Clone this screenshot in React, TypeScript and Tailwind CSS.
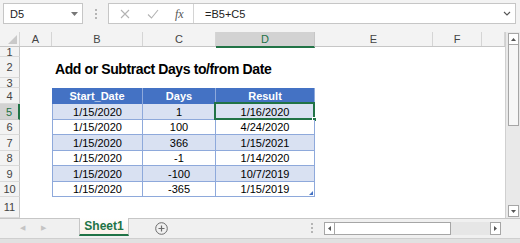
import React from 'react';

const cols = [
  { k: 'A', cls: 'w-[32px]' },
  { k: 'B', cls: 'w-[91px]' },
  { k: 'C', cls: 'w-[73px]' },
  { k: 'D', cls: 'w-[99px]' },
  { k: 'E', cls: 'w-[118px]' },
  { k: 'F', cls: 'w-[49px]' },
  { k: '', cls: 'w-[23px]' },
];

const data = [
  ['1/15/2020', '1', '1/16/2020'],
  ['1/15/2020', '100', '4/24/2020'],
  ['1/15/2020', '366', '1/15/2021'],
  ['1/15/2020', '-1', '1/14/2020'],
  ['1/15/2020', '-100', '10/7/2019'],
  ['1/15/2020', '-365', '1/15/2019'],
];

const rowH = ['h-[16px]', 'h-[15px]', 'h-[16px]', 'h-[15px]', 'h-[16px]', 'h-[15px]'];

function RowHead({ n, cls, active }: { n: number; cls: string; active?: boolean }) {
  return (
    <div
      className={
        active
          ? `${cls} w-[20px] shrink-0 bg-[#d2d2d2] border-r-2 border-r-[#217346] border-b border-b-[#c8c8c8] flex items-center justify-center text-[11px] text-[#217346]`
          : `${cls} w-[20px] shrink-0 bg-[#f3f3f3] border-r border-r-[#c6c6c6] border-b border-b-[#dadada] flex items-center justify-center text-[11px] text-[#444]`
      }
    >
      {n}
    </div>
  );
}

function Dots() {
  return (
    <div className="flex flex-col gap-[2px]">
      <span className="w-[2px] h-[2px] bg-[#b5b5b5]" />
      <span className="w-[2px] h-[2px] bg-[#b5b5b5]" />
      <span className="w-[2px] h-[2px] bg-[#b5b5b5]" />
    </div>
  );
}

export default function App() {
  return (
    <div className="w-[520px] h-[243px] overflow-hidden bg-white flex flex-col text-[#222] leading-[12px]" style={{ fontFamily: '"Liberation Sans", Arial, sans-serif' }}>
      {/* formula bar */}
      <div className="h-[32px] shrink-0 bg-[#f3f3f3] flex items-start pt-[3px] pl-[3px] pr-[4px]">
        <div className="w-[80px] h-[21px] bg-white border border-[#c6c6c6] flex items-center justify-between pl-[6px] pr-[4px] text-[11px]">
          <span>D5</span>
          <svg width="7" height="4" viewBox="0 0 7 4"><path d="M0 0h7L3.5 4z" fill="#777" /></svg>
        </div>
        <div className="w-[25px] h-[21px] flex items-center justify-center">
          <Dots />
        </div>
        <div className="flex-1 h-[21px] bg-white border border-[#c6c6c6] flex items-center">
          <div className="w-[85px] h-full flex items-center border-r border-[#d4d4d4]">
            <svg className="ml-[11px]" width="10" height="10" viewBox="0 0 10 10"><path d="M1 1l8 8M9 1l-8 8" stroke="#b3b3b3" strokeWidth="1.1" /></svg>
            <svg className="ml-[17px]" width="12" height="10" viewBox="0 0 12 10"><path d="M1 5.5l3.5 3.5L11 1" stroke="#b3b3b3" strokeWidth="1.1" fill="none" /></svg>
            <span className="ml-[16px] text-[12px] italic text-[#555]" style={{ fontFamily: '"Liberation Serif", serif' }}>fx</span>
          </div>
          <span className="ml-[11px] text-[11px] flex-1">=B5+C5</span>
          <svg className="mr-[4px]" width="8" height="5" viewBox="0 0 8 5"><path d="M1 1l3 3 3-3" stroke="#555" strokeWidth="1.1" fill="none" /></svg>
        </div>
      </div>

      {/* sheet */}
      <div className="h-[186px] shrink-0 flex">
        <div className="w-[505px] flex flex-col overflow-hidden">
          {/* column headers */}
          <div className="h-[15px] flex shrink-0 bg-[#f3f3f3] border-b border-[#c6c6c6]">
            <div className="w-[20px] shrink-0 border-r border-[#d5d5d5] flex items-end justify-end p-[2px]">
              <svg width="9" height="9" viewBox="0 0 9 9"><path d="M9 0v9H0z" fill="#c9c9c9" /></svg>
            </div>
            {cols.map((c) =>
              c.k === 'D' ? (
                <div key={c.k} className={`${c.cls} shrink-0 h-[16px] bg-[#d2d2d2] border-r border-[#c6c6c6] border-b-2 border-b-[#217346] flex items-center justify-center text-[11px] text-[#217346]`}>
                  {c.k}
                </div>
              ) : (
                <div key={c.k || 'g'} className={`${c.cls} shrink-0 border-r border-[#d5d5d5] flex items-center justify-center text-[11px] text-[#444]`}>
                  {c.k}
                </div>
              )
            )}
          </div>

          {/* row 1 */}
          <div className="flex shrink-0">
            <RowHead n={1} cls="h-[10px]" />
          </div>
          {/* row 2 title */}
          <div className="flex shrink-0">
            <RowHead n={2} cls="h-[21px]" />
            <div className="flex-1 flex items-end pl-[35px] pb-[2px]">
              <span className="text-[14px] font-bold tracking-[-0.4px] text-[#000] leading-none whitespace-nowrap">Add or Subtract Days to/from Date</span>
            </div>
          </div>
          {/* row 3 */}
          <div className="flex shrink-0">
            <RowHead n={3} cls="h-[10px]" />
          </div>
          {/* row 4 header */}
          <div className="flex shrink-0">
            <RowHead n={4} cls="h-[16px]" />
            <div className="w-[32px] shrink-0" />
            <div className="w-[91px] shrink-0 bg-[#4472c4] border-r border-[#8ea9db] flex items-center justify-center text-[11px] font-bold text-white">Start_Date</div>
            <div className="w-[73px] shrink-0 bg-[#4472c4] border-r border-[#8ea9db] flex items-center justify-center text-[11px] font-bold text-white">Days</div>
            <div className="w-[99px] shrink-0 bg-[#4472c4] border-r border-[#8ea9db] flex items-center justify-center text-[11px] font-bold text-white">Result</div>
          </div>
          {/* data rows */}
          {data.map((r, i) => {
            const bg = i % 2 === 0 ? 'bg-[#d9e1f2]' : 'bg-white';
            return (
              <div key={i} className="flex shrink-0">
                <RowHead n={i + 5} cls={rowH[i]} active={i === 0} />
                <div className="w-[32px] shrink-0" />
                <div className={`w-[91px] shrink-0 ${bg} border-l border-r border-b border-[#8ea9db] flex items-center justify-center text-[11px] text-black`}>{r[0]}</div>
                <div className={`w-[73px] shrink-0 ${bg} border-r border-b border-[#8ea9db] flex items-center justify-center text-[11px] text-black`}>{r[1]}</div>
                <div className={`w-[99px] shrink-0 ${bg} border-r border-b border-[#8ea9db] flex items-center justify-center text-[11px] text-black relative`}>
                  {r[2]}
                  {i === 0 && (
                    <>
                      <div className="absolute -left-[2px] -top-[2px] -right-[1px] -bottom-[1px] border-2 border-[#217346]" />
                      <div className="absolute -right-[3px] -bottom-[3px] w-[5px] h-[5px] bg-[#217346] border border-white" />
                    </>
                  )}
                  {i === 5 && (
                    <svg className="absolute right-[1px] bottom-[1px]" width="4" height="4" viewBox="0 0 4 4"><path d="M4 0v4H0z" fill="#4472c4" /></svg>
                  )}
                </div>
              </div>
            );
          })}
          {/* row 11 */}
          <div className="flex shrink-0">
            <RowHead n={11} cls="h-[21px]" />
          </div>
        </div>

        {/* vertical scrollbar */}
        <div className="w-[15px] bg-[#e9e9e9] border-l border-[#d0d0d0] flex flex-col items-center pt-[1px] pb-[1px]">
          <div className="w-[11px] h-[12px] bg-white border border-[#a6a6a6] flex items-center justify-center">
            <svg width="5" height="3" viewBox="0 0 5 3"><path d="M0 3h5L2.5 0z" fill="#555" /></svg>
          </div>
          <div className="w-[11px] h-[81px] bg-[#f7f7f7] border border-[#a6a6a6] border-t-0" />
          <div className="flex-1" />
          <div className="w-[11px] h-[12px] bg-white border border-[#a6a6a6] flex items-center justify-center">
            <svg width="5" height="3" viewBox="0 0 5 3"><path d="M0 0h5L2.5 3z" fill="#555" /></svg>
          </div>
        </div>
      </div>

      {/* sheet tabs */}
      <div className="h-[20px] shrink-0 bg-[#f0f0f0] border-t border-[#c6c6c6] flex items-start">
        <div className="w-[79px] h-[18px] flex items-center">
          <span className="ml-[20px] text-[7px] text-[#c4c4c4]">◀</span>
          <span className="ml-[16px] text-[7px] text-[#c4c4c4]">▶</span>
        </div>
        <div className="w-[50px] h-[18px] bg-gradient-to-b from-white to-[#fbf1ea] border-x border-[#c6c6c6] border-b-2 border-b-[#217346] flex items-center justify-center text-[12px] font-bold text-[#217346] -mt-px">
          Sheet1
        </div>
        <div className="ml-[26px] h-[18px] flex items-center">
          <svg width="13" height="13" viewBox="0 0 13 13"><circle cx="6.5" cy="6.5" r="5.8" stroke="#6b6b6b" strokeWidth="1" fill="none" /><path d="M6.5 3.5v6M3.5 6.5h6" stroke="#6b6b6b" strokeWidth="1.2" /></svg>
        </div>
        <div className="ml-[143px] h-[18px] flex items-center">
          <Dots />
        </div>
        <div className="ml-[11px] mt-[3px] w-[177px] h-[13px] bg-[#e6e6e6] flex">
          <div className="w-[11px] h-[13px] bg-white border border-[#a6a6a6] flex items-center justify-center">
            <svg width="3" height="5" viewBox="0 0 3 5"><path d="M3 0v5L0 2.5z" fill="#555" /></svg>
          </div>
          <div className="w-[116px] h-[13px] bg-white border border-[#a6a6a6] border-l-0" />
          <div className="flex-1" />
          <div className="w-[11px] h-[13px] bg-white border border-[#a6a6a6] flex items-center justify-center">
            <svg width="3" height="5" viewBox="0 0 3 5"><path d="M0 0v5l3-2.5z" fill="#555" /></svg>
          </div>
        </div>
      </div>
      {/* status strip */}
      <div className="flex-1 bg-[#e1e1e1] border-t border-[#cfcfcf]" />
    </div>
  );
}
